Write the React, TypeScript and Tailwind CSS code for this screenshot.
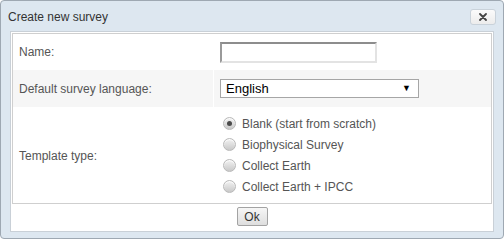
import React from "react";

const font = { fontFamily: '"Liberation Sans", Arial, sans-serif' };

function Radio({ checked, label }: { checked?: boolean; label: string }) {
  return (
    <div className="flex items-center h-[21px]">
      <span className="ml-[3px] w-[13px] h-[13px] rounded-full border border-[#b9b9b9] bg-gradient-to-b from-[#f2f2f2] to-[#c9c9c9] flex items-center justify-center shadow-[inset_0_1px_1px_rgba(255,255,255,0.9)]">
        {checked && <span className="w-[5px] h-[5px] rounded-full bg-[#4a4a4a]" />}
      </span>
      <span className="ml-[6px] text-[12px] text-[#555]">{label}</span>
    </div>
  );
}

export default function App() {
  return (
    <div className="w-[504px] h-[240px] bg-white" style={font}>
      <div className="w-[504px] h-[239px] rounded-[4px] border border-[#9ea8b2] bg-[#dde7f0] flex flex-col">
        <div className="h-[30px] flex items-center justify-between pl-[7px] pr-[7px]">
          <span className="text-[12px] text-[#333] mt-[2px]">Create new survey</span>
          <button className="w-[26px] h-[16px] rounded-[3px] border border-[#c9d2da] bg-gradient-to-b from-[#fbfbfb] to-[#ececec] flex items-center justify-center mt-[2px]">
            <svg width="8" height="8" viewBox="0 0 8 8">
              <path d="M1 1 L7 7 M7 1 L1 7" stroke="#444" strokeWidth="1.8" strokeLinecap="round" />
            </svg>
          </button>
        </div>
        <div className="flex-1 px-[9px] pb-[6px] flex flex-col">
          <div className="flex-1 bg-white border border-[#c9d0d7] flex flex-col">
            <div className="mx-[1px] mt-[1px] border border-[#cfcfcf] flex flex-col">
              <div className="h-[36px] flex">
                <div className="w-[200px] pl-[6px] flex items-center text-[12px] text-[#555]">Name:</div>
                <div className="flex-1 pl-[7px] flex items-center">
                  <div className="w-[157px] h-[21px] border-2 border-t-[#8d8d8d] border-l-[#9a9a9a] border-r-[#e3e3e3] border-b-[#e3e3e3] bg-white" />
                </div>
              </div>
              <div className="h-[37px] flex bg-[#f6f6f6]">
                <div className="w-[200px] pl-[6px] flex items-center text-[12px] text-[#555]">Default survey language:</div>
                <div className="flex-1 pl-[6px] flex items-center border-l border-white">
                  <div className="w-[199px] h-[19px] border border-[#a6a6a6] bg-white flex items-center justify-between pl-[5px] pr-[7px]">
                    <span className="text-[13px] text-black">English</span>
                    <span className="text-[9px] text-black leading-none">▼</span>
                  </div>
                </div>
              </div>
              <div className="h-[96px] flex">
                <div className="w-[200px] pl-[6px] flex items-center text-[12px] text-[#555] pt-[2px]">Template type:</div>
                <div className="flex-1 pl-[7px] flex flex-col justify-center">
                  <Radio checked label="Blank (start from scratch)" />
                  <Radio label="Biophysical Survey" />
                  <Radio label="Collect Earth" />
                  <Radio label="Collect Earth + IPCC" />
                </div>
              </div>
            </div>
            <div className="flex-1 flex justify-center pt-[3px]">
              <button className="w-[31px] h-[19px] border border-[#a3a3a3] rounded-[2px] bg-gradient-to-b from-[#f6f6f6] to-[#dedede] text-[12px] text-[#333] flex items-center justify-center">
                Ok
              </button>
            </div>
          </div>
        </div>
      </div>
    </div>
  );
}
